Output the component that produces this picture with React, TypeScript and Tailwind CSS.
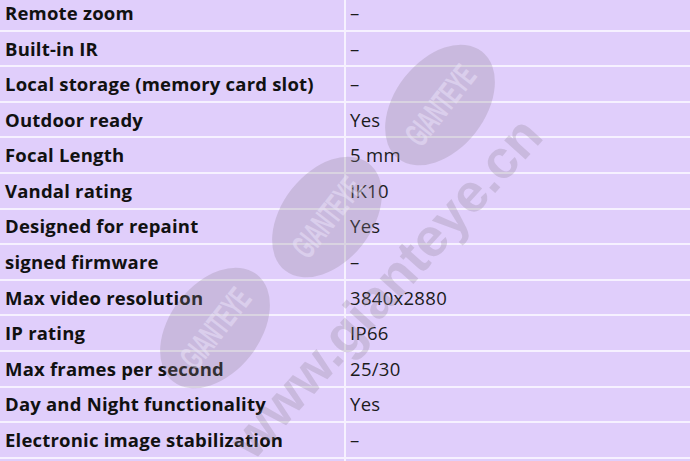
import React from "react";

const rows: [string, string][] = [
  ["Remote zoom", "–"],
  ["Built-in IR", "–"],
  ["Local storage (memory card slot)", "–"],
  ["Outdoor ready", "Yes"],
  ["Focal Length", "5 mm"],
  ["Vandal rating", "IK10"],
  ["Designed for repaint", "Yes"],
  ["signed firmware", "–"],
  ["Max video resolution", "3840x2880"],
  ["IP rating", "IP66"],
  ["Max frames per second", "25/30"],
  ["Day and Night functionality", "Yes"],
  ["Electronic image stabilization", "–"],
  ["", ""],
];

function Badge({ x, y }: { x: number; y: number }) {
  return (
    <div
      className="absolute flex items-center justify-center w-[136px] h-[90px] rounded-[50%] bg-[rgba(140,128,145,0.27)]"
      style={{ left: x - 68, top: y - 45, transform: "rotate(-52deg)" }}
    >
      <span className="text-[34px] font-bold tracking-[-1px] text-[rgba(236,228,250,0.5)] [font-family:'Liberation_Sans','Liberation_Sans',sans-serif] scale-x-[0.55] scale-y-[1]">
        GIANTEYE
      </span>
    </div>
  );
}

export default function App() {
  return (
    <div className="relative w-[690px] h-[461px] overflow-hidden bg-[#e0cefb] [font-family:'Open_Sans','Noto_Sans',sans-serif] text-[#111]">
      <div className="-mt-[4px]">
        {rows.map(([k, v], i) => (
          <div key={i} className="flex h-[35.6px] border-b-2 border-[#f6f1ff] box-border">
            <div className="w-[346px] border-r-2 border-[#f6f1ff] pl-[5px] flex items-center font-bold text-[18.5px] tracking-[0.2px]">
              {k}
            </div>
            <div className="flex-1 pl-[4px] flex items-center text-[18.5px] tracking-[0.3px] text-[#1b1b1b]">{v}</div>
          </div>
        ))}
      </div>
      <div className="pointer-events-none absolute inset-0">
        <Badge x={440} y={105} />
        <Badge x={327} y={217} />
        <Badge x={215} y={328} />
        <div
          className="absolute left-[385px] top-[287px] whitespace-nowrap text-[54px] font-bold leading-none text-[rgba(140,128,145,0.27)] [font-family:'Liberation_Sans',sans-serif]"
          style={{ transform: "translate(-50%, -50%) rotate(-48deg)" }}
        >
          www.gianteye.cn
        </div>
      </div>
    </div>
  );
}
